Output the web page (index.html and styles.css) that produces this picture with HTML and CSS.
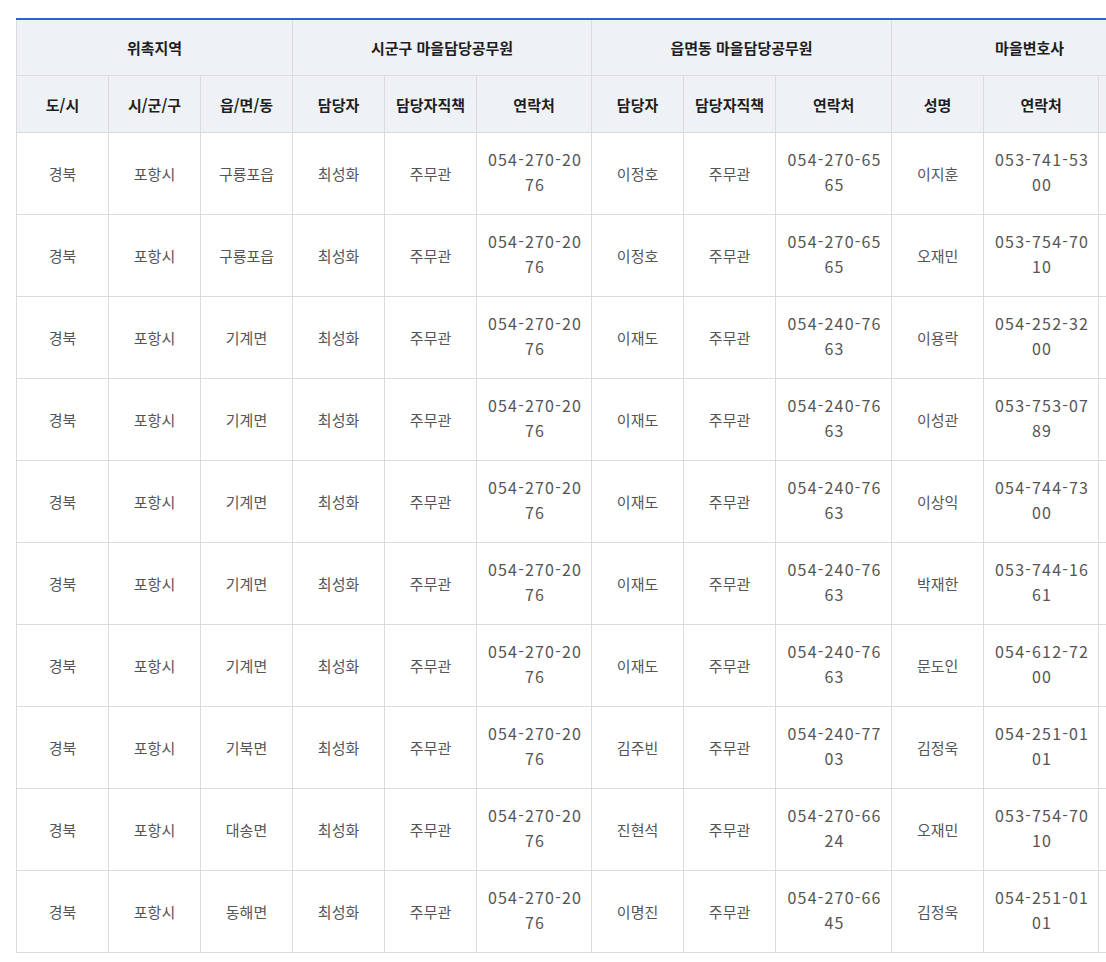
FILE: index.html
```html
<!DOCTYPE html>
<html lang="ko">
<head>
<meta charset="utf-8">
<title>마을변호사 위촉 현황</title>
<link rel="stylesheet" href="styles.css">
</head>
<body>
<div class="table-wrap">
<table class="list">
<colgroup>
<col class="c-s"><col class="c-s"><col class="c-s">
<col class="c-s"><col class="c-s"><col class="c-p">
<col class="c-s"><col class="c-s"><col class="c-p2">
<col class="c-s"><col class="c-p"><col class="c-x">
</colgroup>
<thead>
<tr class="h1">
<th colspan="3">위촉지역</th>
<th colspan="3">시군구 마을담당공무원</th>
<th colspan="3">읍면동 마을담당공무원</th>
<th colspan="3">마을변호사</th>
</tr>
<tr class="h2">
<th>도/시</th><th>시/군/구</th><th>읍/면/동</th>
<th>담당자</th><th>담당자직책</th><th>연락처</th>
<th>담당자</th><th>담당자직책</th><th>연락처</th>
<th>성명</th><th>연락처</th><th></th>
</tr>
</thead>
<tbody>
<tr><td>경북</td><td>포항시</td><td>구룡포읍</td><td>최성화</td><td>주무관</td><td class="tel">054-270-2076</td><td>이정호</td><td>주무관</td><td class="tel">054-270-6565</td><td>이지훈</td><td class="tel">053-741-5300</td><td></td></tr>
<tr><td>경북</td><td>포항시</td><td>구룡포읍</td><td>최성화</td><td>주무관</td><td class="tel">054-270-2076</td><td>이정호</td><td>주무관</td><td class="tel">054-270-6565</td><td>오재민</td><td class="tel">053-754-7010</td><td></td></tr>
<tr><td>경북</td><td>포항시</td><td>기계면</td><td>최성화</td><td>주무관</td><td class="tel">054-270-2076</td><td>이재도</td><td>주무관</td><td class="tel">054-240-7663</td><td>이용락</td><td class="tel">054-252-3200</td><td></td></tr>
<tr><td>경북</td><td>포항시</td><td>기계면</td><td>최성화</td><td>주무관</td><td class="tel">054-270-2076</td><td>이재도</td><td>주무관</td><td class="tel">054-240-7663</td><td>이성관</td><td class="tel">053-753-0789</td><td></td></tr>
<tr><td>경북</td><td>포항시</td><td>기계면</td><td>최성화</td><td>주무관</td><td class="tel">054-270-2076</td><td>이재도</td><td>주무관</td><td class="tel">054-240-7663</td><td>이상익</td><td class="tel">054-744-7300</td><td></td></tr>
<tr><td>경북</td><td>포항시</td><td>기계면</td><td>최성화</td><td>주무관</td><td class="tel">054-270-2076</td><td>이재도</td><td>주무관</td><td class="tel">054-240-7663</td><td>박재한</td><td class="tel">053-744-1661</td><td></td></tr>
<tr><td>경북</td><td>포항시</td><td>기계면</td><td>최성화</td><td>주무관</td><td class="tel">054-270-2076</td><td>이재도</td><td>주무관</td><td class="tel">054-240-7663</td><td>문도인</td><td class="tel">054-612-7200</td><td></td></tr>
<tr><td>경북</td><td>포항시</td><td>기북면</td><td>최성화</td><td>주무관</td><td class="tel">054-270-2076</td><td>김주빈</td><td>주무관</td><td class="tel">054-240-7703</td><td>김정욱</td><td class="tel">054-251-0101</td><td></td></tr>
<tr><td>경북</td><td>포항시</td><td>대송면</td><td>최성화</td><td>주무관</td><td class="tel">054-270-2076</td><td>진현석</td><td>주무관</td><td class="tel">054-270-6624</td><td>오재민</td><td class="tel">053-754-7010</td><td></td></tr>
<tr><td>경북</td><td>포항시</td><td>동해면</td><td>최성화</td><td>주무관</td><td class="tel">054-270-2076</td><td>이명진</td><td>주무관</td><td class="tel">054-270-6645</td><td>김정욱</td><td class="tel">054-251-0101</td><td></td></tr>
</tbody>
</table>
</div>
</body>
</html>
```

FILE: styles.css
```css
html, body {
  margin: 0;
  padding: 0;
  background: #ffffff;
}

body {
  font-family: "Noto Sans CJK KR", "Noto Sans", sans-serif;
  color: #555555;
  overflow: hidden;
}

.table-wrap {
  padding: 18px 0 0 16px;
  overflow: hidden;
}

.list {
  border-collapse: collapse;
  table-layout: fixed;
  width: 1151px;
  border-top: 2px solid #2b62c9;
  border-bottom: 1px solid #d9d9d9;
}

.c-s { width: 92px; }
.c-p { width: 115px; }
.c-p2 { width: 116px; }
.c-x { width: 69px; }

.list th,
.list td {
  border: 1px solid #dcdcdc;
  text-align: center;
  vertical-align: middle;
  padding: 0 10px;
  font-size: 15px;
  word-break: break-all;
}

.list th {
  background: #eef1f6;
  color: #1e1e1e;
  font-weight: 700;
}

.h1 th {
  height: 55px;
}

.h2 th {
  height: 56px;
}

.list td {
  height: 81px;
  line-height: 25px;
  color: #555555;
}

.list td.tel {
  height: 77px;
  font-size: 16px;
  letter-spacing: 1.2px;
  padding: 0 8px 4px 10px;
}
```
